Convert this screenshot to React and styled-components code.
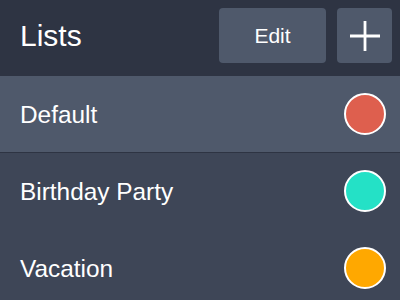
import React from "react";
import styled, { createGlobalStyle } from "styled-components";

const Global = createGlobalStyle`
  html, body { margin: 0; padding: 0; background: #3e4657; }
  body { font-family: "Liberation Sans", Arial, sans-serif; -webkit-font-smoothing: antialiased; }
`;

const Screen = styled.div`
  width: 400px;
  height: 300px;
  overflow: hidden;
  background: #3e4657;
  display: flex;
  flex-direction: column;
`;

const Header = styled.header`
  height: 76px;
  flex: none;
  background: #2e3443;
  display: flex;
  align-items: center;
  padding: 0 8px 0 20px;
  box-sizing: border-box;
`;

const Title = styled.h1`
  margin: 0;
  flex: 1;
  font-size: 30px;
  font-weight: normal;
  color: #ffffff;
  line-height: 1;
  padding-bottom: 5px;
`;

const Actions = styled.div`
  display: flex;
  gap: 11px;
  align-self: flex-start;
  margin-top: 8px;
`;

const HeaderButton = styled.button`
  height: 55px;
  width: ${(p) => p.$width}px;
  border: none;
  border-radius: 4px;
  background: #4f596b;
  color: #ffffff;
  font-family: "Liberation Sans", Arial, sans-serif;
  font-size: 21px;
  font-weight: normal;
  display: flex;
  align-items: center;
  justify-content: center;
  padding: 0;
  cursor: pointer;
`;

const List = styled.ul`
  list-style: none;
  margin: 0;
  padding: 0;
`;

const Row = styled.li`
  height: 77px;
  box-sizing: border-box;
  display: flex;
  align-items: center;
  justify-content: space-between;
  padding: 0 14px 0 20px;
  background: ${(p) => (p.$selected ? "#4f596b" : "#3e4657")};
  border-bottom: 1px solid ${(p) => (p.$selected ? "#2e3443" : "transparent")};
`;

const Name = styled.span`
  color: #ffffff;
  font-size: 24.4px;
  line-height: 1;
  padding-top: 2px;
`;

const Swatch = styled.span`
  width: 42px;
  height: 42px;
  box-sizing: border-box;
  border-radius: 50%;
  border: 2.5px solid #ffffff;
  background: ${(p) => p.$color};
`;

const lists = [
  { name: "Default", color: "#de5f4e", selected: true },
  { name: "Birthday Party", color: "#24e1c6" },
  { name: "Vacation", color: "#ffa800" },
];

export default function App() {
  return (
    <>
      <Global />
      <Screen>
        <Header>
          <Title>Lists</Title>
          <Actions>
            <HeaderButton $width={107}>Edit</HeaderButton>
            <HeaderButton $width={55} aria-label="Add list">
              <svg width="32" height="32" viewBox="0 0 32 32">
                <path d="M16 1V31M1 16H31" stroke="#fff" strokeWidth="2.8" fill="none" />
              </svg>
            </HeaderButton>
          </Actions>
        </Header>
        <List>
          {lists.map((l) => (
            <Row key={l.name} $selected={l.selected}>
              <Name>{l.name}</Name>
              <Swatch $color={l.color} />
            </Row>
          ))}
        </List>
      </Screen>
    </>
  );
}
